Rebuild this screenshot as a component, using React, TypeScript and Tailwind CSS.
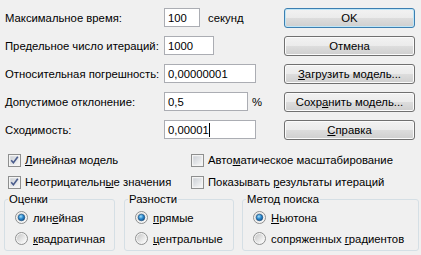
import type { ReactNode } from 'react'

const btn =
  'h-[20px] w-[131px] flex items-center justify-center rounded-[3px] border bg-[linear-gradient(to_bottom,#f2f2f2_0%,#ebebeb_50%,#dddddd_50%,#cfcfcf_100%)]'

function Field({ label, width, value, suffix, caret }: { label: string; width: string; value: string; suffix?: ReactNode; caret?: boolean }) {
  return (
    <div className="flex items-center h-[19px]">
      <div className="w-[159px] shrink-0">{label}</div>
      <div className={`${width} h-[19px] shrink-0 bg-white border border-[#abadb3] flex items-center pl-[3px]`}>
        <span>{value}</span>
        {caret && <span className="w-[1px] h-[14px] bg-black" />}
      </div>
      {suffix}
    </div>
  )
}

function Checkbox({ checked }: { checked?: boolean }) {
  return (
    <svg width="13" height="13" viewBox="0 0 13 13" className="shrink-0">
      <defs>
        <linearGradient id="cbg" x1="0" y1="0" x2="1" y2="1">
          <stop offset="0" stopColor="#cbcfd5" />
          <stop offset="1" stopColor="#f7f7f7" />
        </linearGradient>
      </defs>
      <rect x="0.5" y="0.5" width="12" height="12" fill="#f4f4f4" stroke="#8e8f8f" />
      <rect x="2" y="2" width="9" height="9" fill="url(#cbg)" stroke="#f4f4f4" strokeWidth="0.5" />
      {checked && <path d="M3.2 6.2 L5.4 8.8 L9.8 2.8" fill="none" stroke="#4a5c8c" strokeWidth="1.6" />}
    </svg>
  )
}

function Radio({ checked }: { checked?: boolean }) {
  return (
    <svg width="13" height="13" viewBox="0 0 13 13" className="shrink-0">
      <defs>
        <linearGradient id="rbg" x1="0" y1="0" x2="1" y2="1">
          <stop offset="0" stopColor="#c6c6c6" />
          <stop offset="1" stopColor="#ffffff" />
        </linearGradient>
        <radialGradient id="rdot" cx="0.4" cy="0.35" r="0.7">
          <stop offset="0" stopColor="#a6e0fb" />
          <stop offset="0.5" stopColor="#2c8ad0" />
          <stop offset="1" stopColor="#0f4c86" />
        </radialGradient>
      </defs>
      <circle cx="6.5" cy="6.5" r="6" fill="#f4f4f4" stroke="#8e8f8f" />
      <circle cx="6.5" cy="6.5" r="4.5" fill="url(#rbg)" />
      {checked && <circle cx="6.5" cy="6.5" r="3.3" fill="url(#rdot)" stroke="#1a4f7e" strokeWidth="0.6" />}
    </svg>
  )
}

function Check({ checked, children }: { checked?: boolean; children: ReactNode }) {
  return (
    <div className="flex items-center gap-[4px] h-[22px]">
      <Checkbox checked={checked} />
      <span>{children}</span>
    </div>
  )
}

function Opt({ checked, children }: { checked?: boolean; children: ReactNode }) {
  return (
    <div className="flex items-center gap-[5px] h-[21px]">
      <Radio checked={checked} />
      <span>{children}</span>
    </div>
  )
}

function Group({ title, width, children }: { title: string; width: string; children: ReactNode }) {
  return (
    <fieldset className={`${width} h-[58px] border border-[#d5dfe5] rounded-[3px] pl-[10px]`}>
      <legend className="ml-[-7px] px-[1px] leading-[13px]">{title}</legend>
      <div className="pt-[1px]">{children}</div>
    </fieldset>
  )
}

export default function App() {
  return (
    <div className="w-[421px] h-[255px] bg-[#f0f0f0] text-black text-[11.3px] leading-[14px] whitespace-nowrap font-['Liberation_Sans',sans-serif] overflow-hidden">
      <div className="flex pt-[8px]">
        <div className="flex flex-col gap-[9px] pl-[5px] w-[284px]">
          <Field label="Максимальное время:" width="w-[36px]" value="100" suffix={<span className="ml-[8px]">секунд</span>} />
          <Field label="Предельное число итераций:" width="w-[50px]" value="1000" />
          <Field label="Относительная погрешность:" width="w-[92px]" value="0,00000001" />
          <Field label="Допустимое отклонение:" width="w-[84px]" value="0,5" suffix={<span className="ml-[4px]">%</span>} />
          <Field label="Сходимость:" width="w-[92px]" value="0,00001" caret />
        </div>
        <div className="flex flex-col gap-[8px]">
          <div className={`${btn} border-[#3c7fb1] shadow-[inset_0_0_0_1px_#bfe6f7]`}>OK</div>
          <div className={`${btn} border-[#707070] shadow-[inset_0_0_0_1px_#fbfbfb]`}>Отмена</div>
          <div className={`${btn} border-[#707070] shadow-[inset_0_0_0_1px_#fbfbfb]`}><span><u>З</u>агрузить модель...</span></div>
          <div className={`${btn} border-[#707070] shadow-[inset_0_0_0_1px_#fbfbfb]`}><span>Сохр<u>а</u>нить модель...</span></div>
          <div className={`${btn} border-[#707070] shadow-[inset_0_0_0_1px_#fbfbfb]`}><span><u>С</u>правка</span></div>
        </div>
      </div>

      <div className="grid grid-cols-[183px_1fr] pl-[8px] mt-[9px]">
        <Check checked><u>Л</u>инейная модель</Check>
        <Check>Авто<u>м</u>атическое масштабирование</Check>
        <Check checked>Неотрицательн<u>ы</u>е значения</Check>
        <Check>Показывать <u>р</u>езультаты итераций</Check>
      </div>

      <div className="flex pl-[4px]">
        <Group title="Оценки" width="w-[111px]">
          <Opt checked>лин<u>е</u>йная</Opt>
          <Opt><u>к</u>вадратичная</Opt>
        </Group>
        <div className="w-[9px]" />
        <Group title="Разности" width="w-[110px]">
          <Opt checked><u>п</u>рямые</Opt>
          <Opt><u>ц</u>ентральные</Opt>
        </Group>
        <div className="w-[8px]" />
        <Group title="Метод поиска" width="w-[177px]">
          <Opt checked><u>Н</u>ьютона</Opt>
          <Opt>сопряженных <u>г</u>радиентов</Opt>
        </Group>
      </div>
    </div>
  )
}
